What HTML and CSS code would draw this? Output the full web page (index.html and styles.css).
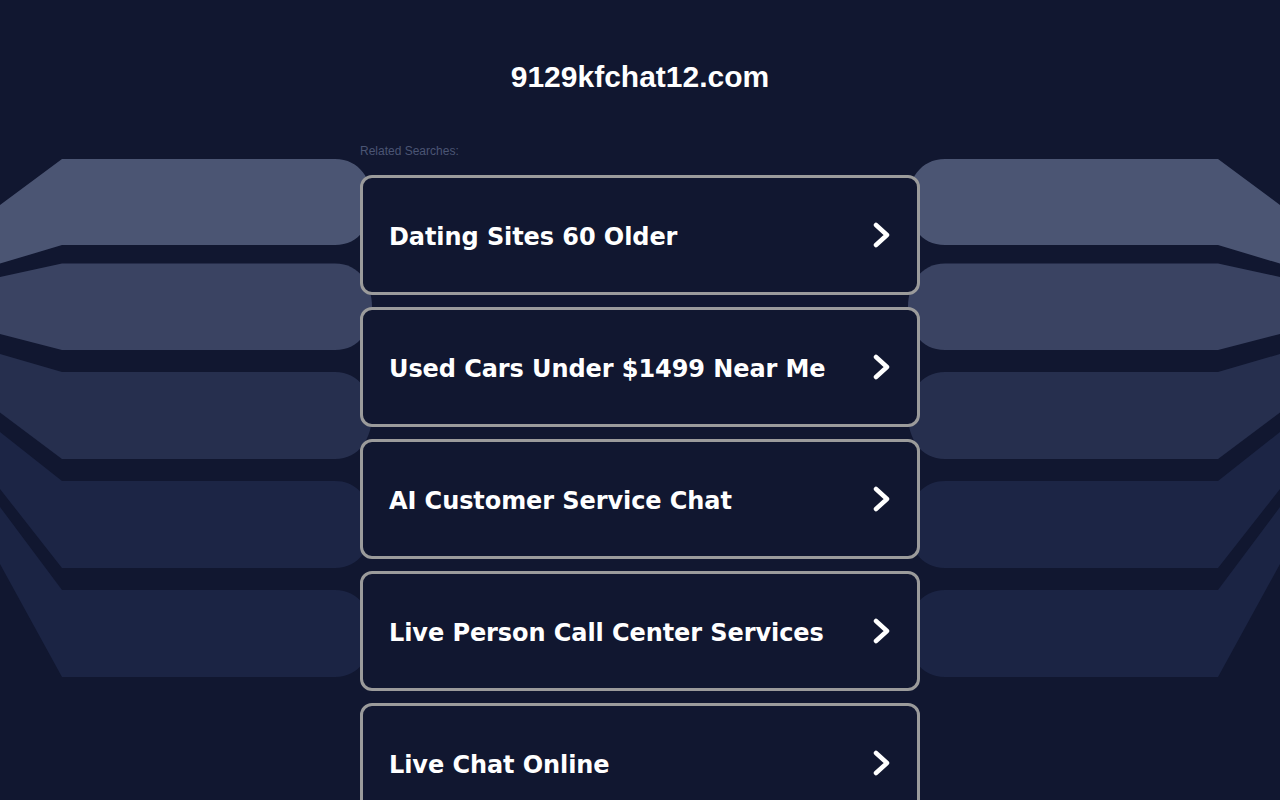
FILE: index.html
```html
<!DOCTYPE html>
<html lang="en">
<head>
    <meta charset="UTF-8">
    <meta name="viewport" content="width=device-width, initial-scale=1.0">
    <title>9129kfchat12.com</title>
    <link rel="stylesheet" href="styles.css">
</head>
<body>
    <!-- Fondo decorativo -->
    <svg class="backdrop" viewBox="0 0 1280 800" preserveAspectRatio="none" aria-hidden="true">
        <g id="bands">
            <path fill="#4b5573" d="M0,205 L62,159 L335,159 C360,159 372,180 372,202 C372,224 360,245 335,245 L62,245 L0,263.6 Z"/>
            <path fill="#3a4362" d="M0,277 L62,263.6 L335,263.6 C360,263.6 372,285 372,307 C372,329 360,350 335,350 L62,350 L0,334 Z"/>
            <path fill="#262f4e" d="M0,354 L62,372 L335,372 C360,372 372,394 372,415.5 C372,437 360,459 335,459 L62,459 L0,412.5 Z"/>
            <path fill="#1c2545" d="M0,432 L62,481 L335,481 C360,481 372,503 372,524.5 C372,546 360,568 335,568 L62,568 L0,489 Z"/>
            <path fill="#1b2444" d="M0,507 L62,590 L335,590 C360,590 372,612 372,633.5 C372,655 360,677 335,677 L62,677 L0,564 Z"/>
        </g>
        <use href="#bands" transform="translate(1280,0) scale(-1,1)"/>
    </svg>

    <div class="page">
        <h1 class="domain">9129kfchat12.com</h1>

        <div class="related">
            <div class="related-title">Related Searches:</div>

            <a class="card" href="#">
                <span class="card-text">Dating Sites 60 Older</span>
                <svg class="chevron" viewBox="0 0 18 26"><path d="M3,3 L14,13 L3,23"/></svg>
            </a>
            <a class="card" href="#">
                <span class="card-text">Used Cars Under $1499 Near Me</span>
                <svg class="chevron" viewBox="0 0 18 26"><path d="M3,3 L14,13 L3,23"/></svg>
            </a>
            <a class="card" href="#">
                <span class="card-text">AI Customer Service Chat</span>
                <svg class="chevron" viewBox="0 0 18 26"><path d="M3,3 L14,13 L3,23"/></svg>
            </a>
            <a class="card" href="#">
                <span class="card-text">Live Person Call Center Services</span>
                <svg class="chevron" viewBox="0 0 18 26"><path d="M3,3 L14,13 L3,23"/></svg>
            </a>
            <a class="card" href="#">
                <span class="card-text">Live Chat Online</span>
                <svg class="chevron" viewBox="0 0 18 26"><path d="M3,3 L14,13 L3,23"/></svg>
            </a>
        </div>
    </div>
</body>
</html>
```

FILE: styles.css
```css
body {
    margin: 0;
    background-color: #111730;
    font-family: "Liberation Sans", Arial, sans-serif;
    overflow: hidden;
}
.backdrop {
    position: absolute;
    top: 0;
    left: 0;
    width: 1280px;
    height: 800px;
    z-index: 0;
}
.page {
    position: relative;
    z-index: 1;
    display: flex;
    flex-direction: column;
    align-items: center;
    padding-top: 59px;
}
.domain {
    margin: 0;
    font-size: 30px;
    line-height: 36px;
    font-weight: bold;
    color: #ffffff;
}
.related {
    width: 560px;
    margin-top: 49px;
}
.related-title {
    font-size: 12px;
    line-height: 14px;
    color: #4b5574;
    margin-bottom: 17px;
}
.card {
    box-sizing: border-box;
    display: flex;
    align-items: center;
    justify-content: space-between;
    height: 120px;
    padding: 0 26px 0 26px;
    margin-bottom: 12px;
    border: 3px solid #9b9b9b;
    border-radius: 12px;
    background-color: #111730;
    color: #ffffff;
    text-decoration: none;
    font-family: "DejaVu Sans", Verdana, sans-serif;
    font-size: 24px;
    font-weight: bold;
}
.card-text {
    padding-top: 3px;
    letter-spacing: -0.08px;
}
.chevron {
    width: 18px;
    height: 26px;
    flex-shrink: 0;
}
.chevron path {
    fill: none;
    stroke: #ffffff;
    stroke-width: 4.5;
    stroke-linecap: round;
    stroke-linejoin: round;
}
```
